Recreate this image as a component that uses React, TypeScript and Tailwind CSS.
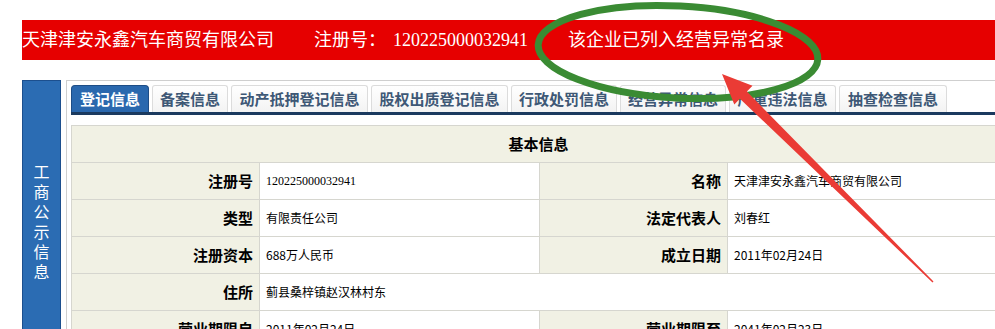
const tabs = [
  { label: "登记信息", w: "w-[78px]", active: true },
  { label: "备案信息", w: "w-[76px]" },
  { label: "动产抵押登记信息", w: "w-[137px]" },
  { label: "股权出质登记信息", w: "w-[137px]" },
  { label: "行政处罚信息", w: "w-[106px]" },
  { label: "经营异常信息", w: "w-[106px]" },
  { label: "严重违法信息", w: "w-[107px]" },
  { label: "抽查检查信息", w: "w-[108px]" },
];

function Label({ children }: { children: React.ReactNode }) {
  return (
    <div className="h-[37px] border-r border-b border-[#d6d6cf] bg-[#f1f1e4] flex items-center justify-end pr-[6px] text-[15px] font-bold text-black">
      {children}
    </div>
  );
}

function Value({ children, wide }: { children?: React.ReactNode; wide?: boolean }) {
  return (
    <div
      className={`h-[37px] border-r border-b border-[#d6d6cf] bg-white flex items-center pl-[6px] text-[12px] text-black ${
        wide ? "col-span-3" : ""
      }`}
    >
      {children}
    </div>
  );
}

export default function App() {
  return (
    <div className="relative w-[995px] h-[329px] overflow-hidden bg-white font-['Noto_Sans_CJK_SC',sans-serif]">
      {/* top banner */}
      <div className="mt-[20px] ml-[22px] h-[40px] bg-[#e60000] flex items-center text-white text-[18px] font-['Liberation_Serif','Noto_Sans_CJK_SC',serif] whitespace-nowrap">
        <span>天津津安永鑫汽车商贸有限公司</span>
        <span className="ml-[40px]">注册号：</span>
        <span className="ml-[7px]">120225000032941</span>
        <span className="ml-[40px]">该企业已列入经营异常名录</span>
      </div>

      <div className="mt-[20px] ml-[22px] flex">
        {/* sidebar */}
        <div className="w-[39px] h-[260px] shrink-0 bg-[#2b6cb3] border border-[#1c4f8e] flex flex-col items-center pt-[80px] text-white text-[16px] leading-[20px]">
          {"工商公示信息".split("").map((c, i) => (
            <span key={i}>{c}</span>
          ))}
        </div>

        {/* main panel */}
        <div className="ml-[5px] border-l border-t border-[#cfcfcf] pl-[4px] pt-[4px] w-[1000px] shrink-0">
          <div className="flex gap-[3px] items-end">
            {tabs.map((t) =>
              t.active ? (
                <div
                  key={t.label}
                  className={`${t.w} h-[27px] rounded-t-[4px] bg-[#2a68ae] border border-b-0 border-[#1e4d86] flex items-center justify-center text-white text-[15px] font-bold`}
                >
                  {t.label}
                </div>
              ) : (
                <div
                  key={t.label}
                  className={`${t.w} h-[27px] rounded-t-[3px] bg-gradient-to-b from-white to-[#f3f3f3] border border-b-0 border-[#dcdcdc] flex items-center justify-center text-[#3e5876] text-[15px] font-bold`}
                >
                  {t.label}
                </div>
              )
            )}
          </div>
          <div className="h-[3px] bg-[#1b3a5f] w-[940px]" />

          {/* basic info table */}
          <div className="mt-[10px] w-[934px] grid grid-cols-[188px_280px_188px_278px] border-l border-t border-[#d6d6cf]">
            <div className="col-span-4 h-[37px] border-r border-b border-[#d6d6cf] bg-[#f1f1e4] flex items-center justify-center text-[15px] font-bold text-black">
              基本信息
            </div>
            <Label>注册号</Label>
            <Value>
              <span className="font-['Liberation_Serif',serif]">120225000032941</span>
            </Value>
            <Label>名称</Label>
            <Value>天津津安永鑫汽车商贸有限公司</Value>

            <Label>类型</Label>
            <Value>有限责任公司</Value>
            <Label>法定代表人</Label>
            <Value>刘春红</Value>

            <Label>注册资本</Label>
            <Value>688万人民币</Value>
            <Label>成立日期</Label>
            <Value>2011年02月24日</Value>

            <Label>住所</Label>
            <Value wide>蓟县桑梓镇赵汉林村东</Value>

            <Label>营业期限自</Label>
            <Value>2011年02月24日</Value>
            <Label>营业期限至</Label>
            <Value>2041年02月23日</Value>
          </div>
        </div>
      </div>

      {/* annotation overlay */}
      <svg className="absolute inset-0 pointer-events-none" width="995" height="329" viewBox="0 0 995 329">
        <ellipse
          cx="678"
          cy="52"
          rx="140"
          ry="46"
          fill="none"
          stroke="#3a8b33"
          strokeWidth="7"
          transform="rotate(3 678 52)"
        />
        <polygon
          points="722,74 752.5,85.8 746.9,91.5 933.5,281.5 932.5,282.5 739.9,98.7 734.3,104.4"
          fill="#ea3b35"
        />
      </svg>
    </div>
  );
}
